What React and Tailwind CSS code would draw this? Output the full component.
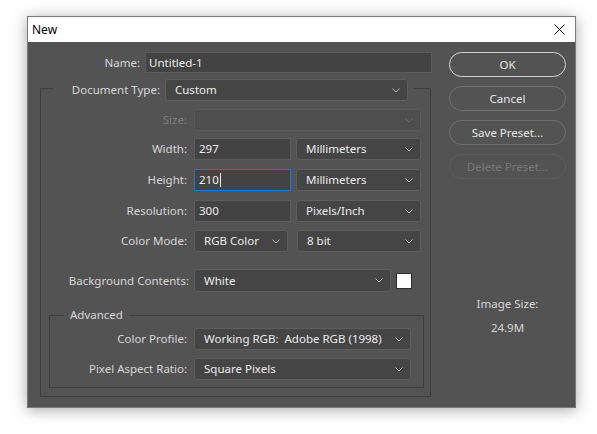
import React from "react";

const FONT = { fontFamily: '"Noto Sans", "Open Sans", "Liberation Sans", sans-serif' };

function Chevron({ dim }) {
  return (
    <svg width="8" height="5" viewBox="0 0 8 5" className="shrink-0">
      <polyline points="0.5,0.5 4,4 7.5,0.5" fill="none" stroke={dim ? "#6a6a6a" : "#b8b8b8"} strokeWidth="1" />
    </svg>
  );
}

function Select({ value, w, h = "h-[22px]", dim }) {
  return (
    <div className={`${w} ${h} shrink-0 flex items-center justify-between rounded-[3px] border ${dim ? "border-[#5a5a5a] bg-[#4e4e4e]" : "border-[#5e5e5e] bg-[#454545]"} pl-[9px] pr-[7px] text-[#ececec]`}>
      <span className="whitespace-nowrap leading-none">{value}</span>
      <Chevron dim={dim} />
    </div>
  );
}

function Input({ value, w, focus }) {
  return (
    <div className={`${w} h-[22px] shrink-0 flex items-center border ${focus ? "border-[#1a73e8]" : "border-[#5c5c5c]"} bg-[#434343] pl-[4px] text-[#ececec]`}>
      <span className="leading-none">{value}</span>
      {focus && <span className="ml-[1px] w-[1px] h-[14px] bg-[#ececec]" />}
    </div>
  );
}

function Button({ children, primary, disabled }) {
  return (
    <div
      className={`h-[25px] w-[117px] flex items-center justify-center rounded-full border ${
        primary ? "border-[#d2d2d2] border-[1.5px]" : disabled ? "border-[#5d5d5d]" : "border-[#707070]"
      } ${disabled ? "text-[#787878]" : "text-[#e6e6e6]"}`}
    >
      {children}
    </div>
  );
}

function Label({ children, w, dim }) {
  return (
    <div className={`${w} shrink-0 text-right whitespace-nowrap ${dim ? "text-[#7c7c7c]" : "text-[#d6d6d6]"}`}>{children}</div>
  );
}

export default function App() {
  return (
    <div className="w-[597px] h-[434px] bg-white pt-[16px] pl-[27px] text-[11.5px]" style={FONT}>
      <div className="w-[549px] h-[392px] flex flex-col border border-[#7a7a7a] shadow-[0_2px_14px_rgba(0,0,0,0.35)]">
        {/* title bar */}
        <div className="h-[25px] shrink-0 bg-white flex items-center justify-between pl-[4px] pr-[10px]">
          <span className="text-[12px] text-black leading-none">New</span>
          <svg width="11" height="11" viewBox="0 0 11 11">
            <path d="M0.5 0.5 L10.5 10.5 M10.5 0.5 L0.5 10.5" stroke="#111" strokeWidth="1" />
          </svg>
        </div>

        {/* body */}
        <div className="flex-1 bg-[#535353] flex gap-[17px]">
          {/* left column */}
          <div className="w-[404px] flex flex-col">
            {/* Name */}
            <div className="mt-[10px] flex items-center gap-[5px]">
              <Label w="w-[112px]">Name:</Label>
              <div className="w-[287px] h-[21px] flex items-center border border-[#5c5c5c] bg-[#434343] pl-[3px] text-[#ececec]">
                Untitled-1
              </div>
            </div>

            {/* Document group */}
            <div className="mt-[15px] ml-[12px] w-[391px] h-[309px] border border-[#3e3e3e] flex flex-col">
              <div className="-mt-[10px] ml-[12px] w-fit bg-[#535353] pl-[13px] pr-[6px] flex items-center gap-[5px]">
                <Label w="w-[94px]">Document Type:</Label>
                <Select value="Custom" w="w-[243px]" />
              </div>

              <div className="mt-[8px] flex items-center gap-[7px]">
                <Label w="w-[146px]" dim>Size:</Label>
                <Select value="" w="w-[227px]" dim />
              </div>

              <div className="mt-[7px] flex items-center gap-[7px]">
                <Label w="w-[146px]">Width:</Label>
                <Input value="297" w="w-[97px]" />
                <div className="ml-[-2px]">
                  <Select value="Millimeters" w="w-[125px]" />
                </div>
              </div>

              <div className="mt-[9px] flex items-center gap-[7px]">
                <Label w="w-[146px]">Height:</Label>
                <Input value="210" w="w-[97px]" focus />
                <div className="ml-[-2px]">
                  <Select value="Millimeters" w="w-[125px]" />
                </div>
              </div>

              <div className="mt-[9px] flex items-center gap-[7px]">
                <Label w="w-[146px]">Resolution:</Label>
                <Input value="300" w="w-[97px]" />
                <div className="ml-[-2px]">
                  <Select value="Pixels/Inch" w="w-[125px]" />
                </div>
              </div>

              <div className="mt-[8px] flex items-center gap-[7px]">
                <Label w="w-[146px]">Color Mode:</Label>
                <Select value="RGB Color" w="w-[94px]" />
                <div className="ml-[2px]">
                  <Select value="8 bit" w="w-[124px]" />
                </div>
              </div>

              <div className="mt-[17px] flex items-center gap-[5px]">
                <Label w="w-[148px]">Background Contents:</Label>
                <Select value="White" w="w-[197px]" h="h-[23px]" />
                <div className="w-[16px] h-[16px] bg-white border border-[#2f2f2f]" />
              </div>

              {/* Advanced group */}
              <div className="mt-[23px] ml-[8px] w-[375px] h-[73px] border border-[#3e3e3e] flex flex-col">
                <div className="-mt-[9px] ml-[14px] w-fit bg-[#535353] px-[6px] h-[16px] flex items-center text-[#d6d6d6]">
                  Advanced
                </div>
                <div className="mt-[5px] flex items-center gap-[7px]">
                  <Label w="w-[137px]">Color Profile:</Label>
                  <Select value={"Working RGB:\u00a0 Adobe RGB (1998)"} w="w-[217px]" />
                </div>
                <div className="mt-[8px] flex items-center gap-[7px]">
                  <Label w="w-[137px]">Pixel Aspect Ratio:</Label>
                  <Select value="Square Pixels" w="w-[217px]" />
                </div>
              </div>
            </div>
          </div>

          {/* right column */}
          <div className="w-[117px] flex flex-col">
            <div className="mt-[10px] flex flex-col gap-[9px]">
              <Button primary>OK</Button>
              <Button>Cancel</Button>
              <Button>Save Preset...</Button>
              <Button disabled>Delete Preset...</Button>
            </div>
            <div className="mt-[117px] flex flex-col items-center text-[#d6d6d6] leading-[16px]">
              <span>Image Size:</span>
              <span className="mt-[8px]">24.9M</span>
            </div>
          </div>
        </div>
      </div>
    </div>
  );
}
